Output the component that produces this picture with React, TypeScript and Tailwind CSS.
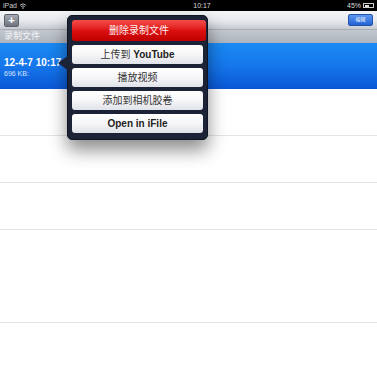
import React from "react";

const font = { fontFamily: '"Liberation Sans", "Noto Sans CJK SC", sans-serif' };

function Btn({ children, red }: { children: React.ReactNode; red?: boolean }) {
  return (
    <div
      className={
        red
          ? "h-[21px] rounded-[3px] bg-gradient-to-b from-[#f44a4a] via-[#dc1010] to-[#c00000] text-[#fff2f2] flex items-center justify-center text-[10px] mr-[-3px]"
          : "h-[19px] rounded-[3px] bg-gradient-to-b from-[#ffffff] via-[#f6f6f8] to-[#dfe2e8] text-[#333] flex items-center justify-center text-[10px]"
      }
    >
      {children}
    </div>
  );
}

export default function App() {
  return (
    <div className="relative w-[377px] h-[365px] bg-white overflow-hidden" style={font}>
      {/* status bar */}
      <div className="h-[11px] bg-black text-white text-[7px] leading-[11px] flex items-center justify-between px-[3px]">
        <div className="flex items-center gap-[2px]">
          <span className="text-[#ccc]">iPad</span>
          <svg width="8" height="6" viewBox="0 0 8 6">
            <path d="M1 2.2 A4.5 4.5 0 0 1 7 2.2" stroke="#ccc" strokeWidth="0.9" fill="none" />
            <path d="M2.3 3.6 A2.6 2.6 0 0 1 5.7 3.6" stroke="#ccc" strokeWidth="0.9" fill="none" />
            <circle cx="4" cy="5" r="0.8" fill="#ccc" />
          </svg>
        </div>
        <span className="text-[#ddd] ml-[30px]">10:17</span>
        <div className="flex items-center gap-[2px]">
          <span className="text-[#ddd]">45%</span>
          <div className="w-[11px] h-[5px] border border-[#ccc] p-[0.5px] flex">
            <div className="w-[4px] h-full bg-[#ddd]" />
          </div>
        </div>
      </div>
      {/* nav bar */}
      <div className="h-[19px] bg-gradient-to-b from-[#f4f5f7] via-[#e9ebee] to-[#c7cbd1] border-b border-[#a9adb5] flex items-center justify-between px-[4px]">
        <div className="w-[15px] h-[13px] rounded-[2px] bg-gradient-to-b from-[#a4a9b2] to-[#6f7580] border border-[#5c626c] flex items-center justify-center text-white text-[11px] font-bold leading-none">
          +
        </div>
        <div className="w-[25px] h-[12px] rounded-[2px] bg-gradient-to-b from-[#5b95ef] to-[#2262d6] border border-[#2553a8] flex items-center justify-center text-white text-[5px]">
          编辑
        </div>
      </div>
      {/* section header */}
      <div className="h-[13px] bg-gradient-to-b from-[#c3c8cf] to-[#aeb4bd] text-[#f4f5f7] text-[9px] leading-[13px] pl-[4px]">
        录制文件
      </div>
      {/* selected row */}
      <div className="h-[46px] bg-gradient-to-b from-[#1a8af3] via-[#1676ea] to-[#0b57d6] text-white flex flex-col justify-center pl-[4px]">
        <div className="text-[10px] font-bold leading-[12px] mt-[2px]">12-4-7 10:17</div>
        <div className="text-[7px] leading-[9px] text-[#d5e5ff]">696 KB:</div>
      </div>
      <div className="h-[47px] border-b border-[#e4e4e4]" />
      <div className="h-[47px] border-b border-[#e4e4e4]" />
      <div className="h-[47px] border-b border-[#e4e4e4]" />
      <div className="h-[93px] border-b border-[#e4e4e4]" />

      {/* popover */}
      <div className="absolute left-[67px] top-[15px] w-[141px] h-[125px] rounded-[5px] bg-[#1c2337] border border-[#0f1422] shadow-[0_10px_18px_rgba(0,0,0,0.45)] px-[4px] pt-[4px] flex flex-col gap-[4px]">
        <Btn red>删除录制文件</Btn>
        <Btn>
          上传到&nbsp;<span className="font-bold text-[#222]">YouTube</span>
        </Btn>
        <Btn>播放视频</Btn>
        <Btn>添加到相机胶卷</Btn>
        <Btn>
          <span className="font-bold text-[#222]">Open in iFile</span>
        </Btn>
        <svg className="absolute left-[-10px] top-[39px]" width="11" height="16" viewBox="0 0 11 16">
          <path d="M11 0 L0 8 L11 16 Z" fill="#1c2337" />
        </svg>
      </div>
    </div>
  );
}
